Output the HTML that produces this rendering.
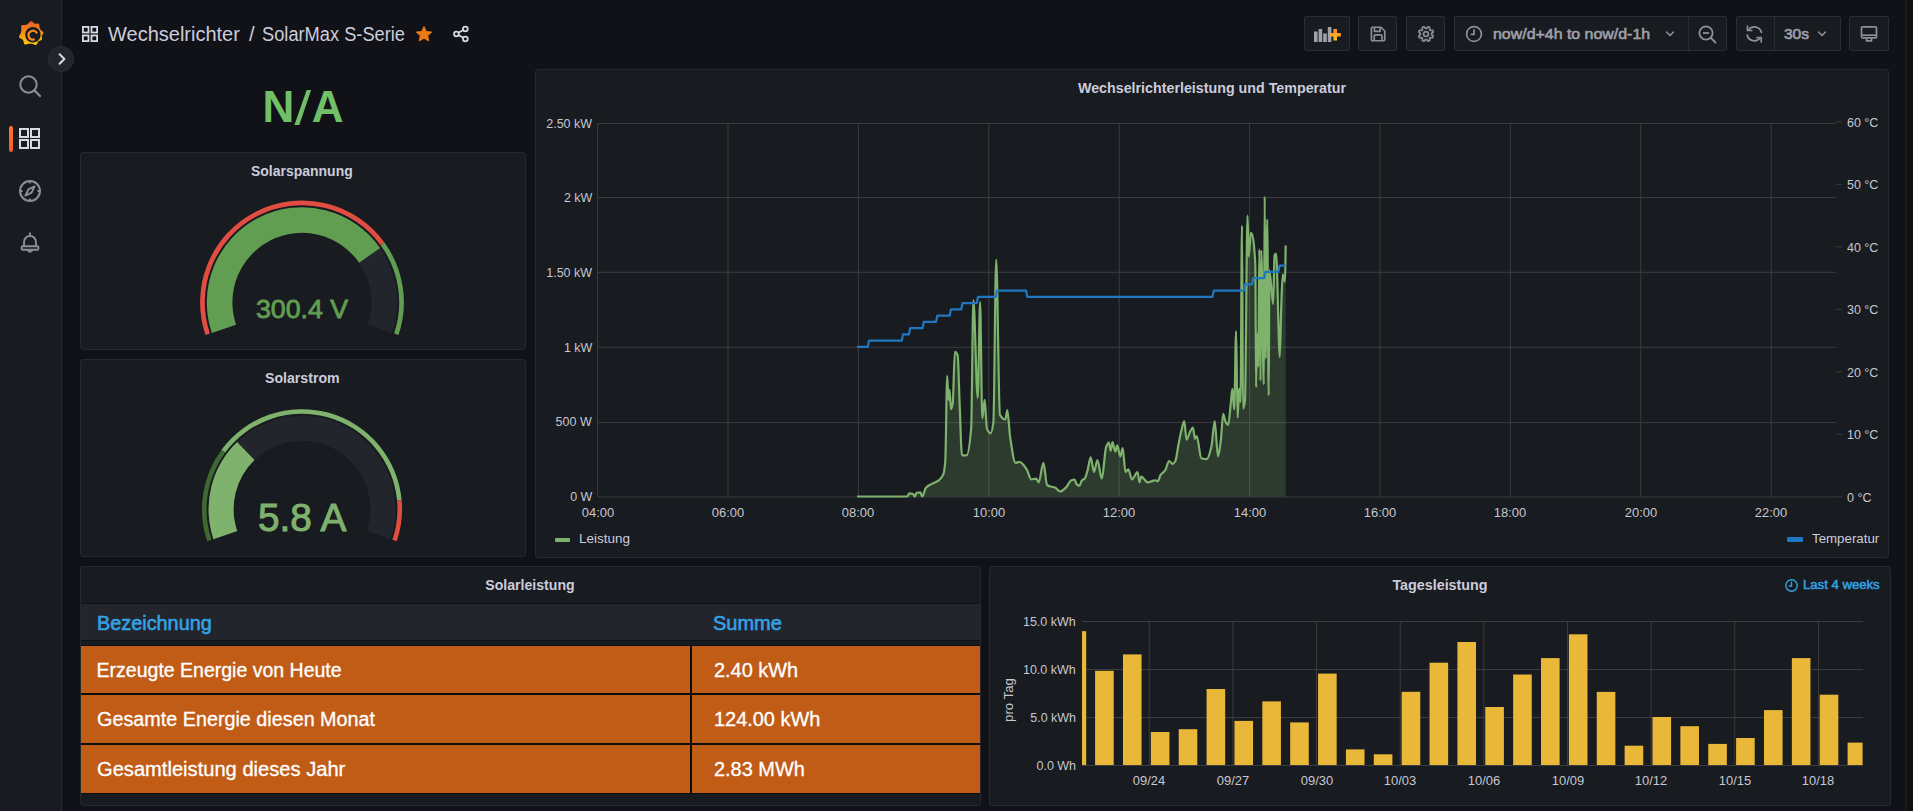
<!DOCTYPE html>
<html><head><meta charset="utf-8"><style>
html,body{margin:0;padding:0;background:#111217;}
body{width:1913px;height:811px;overflow:hidden;background:#111217;position:relative;font-family:"Liberation Sans", sans-serif;}
.t{position:absolute;white-space:pre;line-height:1;}
svg{display:block;}
</style></head><body>
<div style="position:absolute;left:0px;top:0px;width:61px;height:811px;background:#181b1f;border-right:1px solid #25272c;"></div>
<div style="position:absolute;left:1906px;top:0px;width:1px;height:811px;background:#1f1f22;"></div>
<div style="position:absolute;left:1907px;top:0px;width:6px;height:811px;background:#100f12;"></div>
<svg style="position:absolute;left:17px;top:20px;" width="28" height="28" viewBox="0 0 28 28"><defs><linearGradient id="lg" x1="0" y1="0" x2="0" y2="1"><stop offset="0" stop-color="#f05a28"/><stop offset="1" stop-color="#fbca0a"/></linearGradient></defs>
<path fill="url(#lg)" d="M26.25 13.60 L26.15 13.81 L26.03 14.02 L25.90 14.22 L25.75 14.42 L25.60 14.62 L25.45 14.80 L25.31 14.99 L25.17 15.17 L25.04 15.35 L24.94 15.53 L24.85 15.71 L24.78 15.89 L24.73 16.08 L24.71 16.27 L24.70 16.47 L24.72 16.67 L24.75 16.89 L24.79 17.11 L24.84 17.33 L24.89 17.57 L24.95 17.80 L25.00 18.04 L25.04 18.29 L25.06 18.53 L25.07 18.76 L25.05 18.99 L25.01 19.21 L24.95 19.42 L24.85 19.61 L24.73 19.79 L24.58 19.96 L24.41 20.10 L24.22 20.23 L24.00 20.35 L23.78 20.45 L23.55 20.54 L23.31 20.61 L23.07 20.69 L22.83 20.75 L22.60 20.82 L22.38 20.88 L22.17 20.95 L21.97 21.03 L21.78 21.12 L21.62 21.22 L21.46 21.33 L21.32 21.45 L21.20 21.59 L21.08 21.75 L20.98 21.92 L20.89 22.11 L20.81 22.31 L20.73 22.52 L20.65 22.75 L20.57 22.98 L20.48 23.21 L20.40 23.45 L20.30 23.68 L20.19 23.90 L20.07 24.11 L19.93 24.30 L19.78 24.47 L19.62 24.62 L19.43 24.74 L19.24 24.84 L19.03 24.90 L18.81 24.93 L18.58 24.94 L18.35 24.92 L18.11 24.88 L17.86 24.82 L17.62 24.75 L17.38 24.66 L17.14 24.57 L16.91 24.47 L16.68 24.37 L16.46 24.27 L16.25 24.18 L16.04 24.10 L15.84 24.02 L15.64 23.95 L15.45 23.89 L15.26 23.84 L15.07 23.80 L14.89 23.76 L14.71 23.73 L14.53 23.71 L14.35 23.69 L14.18 23.67 L14.00 23.66 L13.82 23.65 L13.65 23.64 L13.47 23.63 L13.30 23.63 L13.12 23.62 L12.95 23.62 L12.77 23.62 L12.59 23.63 L12.41 23.64 L12.23 23.65 L12.04 23.67 L11.85 23.70 L11.66 23.73 L11.46 23.78 L11.26 23.83 L11.05 23.89 L10.83 23.96 L10.61 24.03 L10.38 24.11 L10.15 24.19 L9.91 24.26 L9.66 24.34 L9.41 24.40 L9.17 24.46 L8.92 24.49 L8.68 24.51 L8.44 24.51 L8.22 24.48 L8.00 24.42 L7.80 24.34 L7.62 24.22 L7.45 24.09 L7.30 23.92 L7.16 23.73 L7.05 23.53 L6.95 23.30 L6.87 23.07 L6.79 22.82 L6.73 22.58 L6.68 22.33 L6.63 22.08 L6.58 21.84 L6.53 21.61 L6.49 21.38 L6.43 21.17 L6.38 20.96 L6.32 20.77 L6.25 20.58 L6.17 20.41 L6.08 20.24 L5.99 20.09 L5.88 19.94 L5.76 19.81 L5.64 19.68 L5.50 19.55 L5.35 19.43 L5.19 19.32 L5.01 19.21 L4.83 19.11 L4.63 19.01 L4.43 18.91 L4.21 18.81 L3.99 18.70 L3.76 18.59 L3.53 18.48 L3.31 18.36 L3.09 18.23 L2.88 18.09 L2.69 17.94 L2.51 17.78 L2.36 17.61 L2.24 17.42 L2.15 17.22 L2.08 17.02 L2.05 16.80 L2.05 16.58 L2.07 16.35 L2.13 16.12 L2.20 15.89 L2.30 15.66 L2.41 15.44 L2.53 15.21 L2.66 14.99 L2.80 14.78 L2.93 14.57 L3.06 14.36 L3.19 14.17 L3.30 13.97 L3.41 13.78 L3.51 13.60 L3.60 13.42 L3.68 13.24 L3.75 13.06 L3.82 12.89 L3.88 12.71 L3.93 12.54 L3.98 12.37 L4.02 12.20 L4.06 12.03 L4.10 11.85 L4.14 11.68 L4.17 11.51 L4.21 11.34 L4.24 11.17 L4.27 10.99 L4.30 10.82 L4.33 10.64 L4.35 10.46 L4.36 10.28 L4.38 10.10 L4.38 9.91 L4.38 9.71 L4.37 9.51 L4.35 9.31 L4.33 9.09 L4.30 8.87 L4.27 8.64 L4.23 8.40 L4.19 8.16 L4.15 7.91 L4.11 7.66 L4.09 7.41 L4.07 7.15 L4.07 6.90 L4.08 6.66 L4.12 6.42 L4.18 6.20 L4.26 5.99 L4.37 5.80 L4.50 5.63 L4.66 5.48 L4.84 5.35 L5.04 5.25 L5.26 5.16 L5.49 5.09 L5.74 5.04 L5.99 5.01 L6.24 4.98 L6.50 4.97 L6.75 4.96 L7.00 4.95 L7.24 4.95 L7.47 4.94 L7.70 4.93 L7.92 4.92 L8.13 4.90 L8.33 4.87 L8.52 4.84 L8.71 4.80 L8.89 4.75 L9.07 4.70 L9.24 4.65 L9.41 4.59 L9.57 4.52 L9.73 4.45 L9.89 4.38 L10.05 4.30 L10.21 4.22 L10.37 4.14 L10.52 4.04 L10.68 3.94 L10.83 3.84 L10.98 3.72 L11.13 3.60 L11.28 3.47 L11.44 3.32 L11.59 3.17 L11.75 3.01 L11.91 2.83 L12.07 2.66 L12.24 2.47 L12.41 2.29 L12.59 2.11 L12.77 1.93 L12.96 1.76 L13.16 1.61 L13.36 1.48 L13.57 1.37 L13.78 1.28 L14.00 1.23 L14.22 1.20 L14.43 1.21 L14.65 1.25 L14.86 1.32 L15.07 1.42 L15.27 1.54 L15.46 1.69 L15.65 1.85 L15.83 2.03 L16.01 2.21 L16.18 2.39 L16.34 2.57 L16.50 2.75 L16.66 2.92 L16.82 3.08 L16.98 3.22 L17.14 3.34 L17.30 3.45 L17.46 3.54 L17.63 3.61 L17.81 3.67 L18.00 3.70 L18.19 3.72 L18.40 3.73 L18.61 3.72 L18.83 3.70 L19.06 3.67 L19.30 3.63 L19.54 3.60 L19.79 3.57 L20.04 3.54 L20.29 3.53 L20.54 3.52 L20.78 3.54 L21.02 3.58 L21.24 3.64 L21.44 3.72 L21.63 3.83 L21.80 3.97 L21.95 4.13 L22.08 4.31 L22.19 4.51 L22.27 4.73 L22.34 4.96 L22.39 5.21 L22.43 5.46 L22.46 5.71 L22.48 5.97 L22.49 6.22 L22.50 6.47 L22.51 6.71 L22.53 6.94 L22.54 7.16 L22.56 7.38 L22.59 7.59 L22.62 7.78 L22.66 7.97 L22.71 8.16 L22.77 8.33 L22.83 8.50 L22.90 8.67 L22.97 8.83 L23.05 8.99 L23.14 9.14 L23.24 9.29 L23.34 9.44 L23.46 9.59 L23.58 9.73 L23.71 9.87 L23.85 10.01 L24.01 10.15 L24.17 10.30 L24.35 10.44 L24.53 10.58 L24.72 10.73 L24.92 10.88 L25.12 11.03 L25.31 11.20 L25.51 11.36 L25.69 11.54 L25.86 11.72 L26.01 11.91 L26.14 12.11 L26.25 12.31 L26.32 12.52 L26.37 12.73 L26.39 12.95 L26.37 13.17 L26.32 13.38Z"/>
<circle cx="15.9" cy="14.7" r="7.7" fill="#181b1f"/>
<path d="M19.60 12.68 A4.4 4.4 0 1 0 16.76 19.53" fill="none" stroke="#f48a24" stroke-width="2.3" stroke-linecap="round"/>
<circle cx="16.1" cy="15.3" r="2.6" fill="#181b1f"/></svg>
<svg style="position:absolute;left:18px;top:74px;" width="24" height="24" viewBox="0 0 24 24"><circle cx="10.5" cy="10.5" r="8.2" fill="none" stroke="#8e8e9a" stroke-width="2"/><path d="M16.5 16.5 L22 22" stroke="#8e8e9a" stroke-width="2.2" stroke-linecap="round"/></svg>
<div style="position:absolute;left:9px;top:126px;width:4px;height:26px;background:linear-gradient(#ff7a2a,#f05a28);border-radius:2px;"></div>
<svg style="position:absolute;left:18px;top:127px;" width="24" height="24" viewBox="0 0 24 24"><g fill="none" stroke="#d8d9e3" stroke-width="2"><rect x="2" y="2" width="8" height="8"/><rect x="13" y="2" width="8" height="8"/><rect x="2" y="13" width="8" height="8"/><rect x="13" y="13" width="8" height="8"/></g></svg>
<svg style="position:absolute;left:18px;top:179px;" width="24" height="24" viewBox="0 0 24 24"><g fill="none" stroke="#8e8e9a" stroke-width="2"><circle cx="12" cy="12" r="10"/><path d="M12 2.5v2M12 19.5v2M2.5 12h2M19.5 12h2" stroke-width="1.8"/><path d="M16.6 7.4 L13.6 13.6 L7.4 16.6 L10.4 10.4 Z" stroke-linejoin="round" stroke-width="1.9"/></g></svg>
<svg style="position:absolute;left:18px;top:231px;" width="24" height="24" viewBox="0 0 24 24"><g fill="none" stroke="#8e8e9a" stroke-width="1.9" stroke-linejoin="round"><path d="M12 1.5v2.5"/><path d="M6 15.2 V11 A6 6 0 0 1 18 11 V15.2"/><rect x="3.6" y="15.2" width="16.8" height="3.6" rx="1"/><path d="M9.7 19 A2.4 2.4 0 0 0 14.3 19"/></g></svg>
<div style="position:absolute;left:48px;top:46px;width:24px;height:24px;border-radius:50%;background:#22252b;border:1px solid #2c2f35;"></div>
<svg style="position:absolute;left:54.5px;top:52px;" width="14" height="14" viewBox="0 0 14 14"><path d="M4.6 2.2 L9.4 7 L4.6 11.8" fill="none" stroke="#d8d9e3" stroke-width="2" stroke-linecap="round" stroke-linejoin="round"/></svg>
<svg style="position:absolute;left:81px;top:25px;" width="18" height="18" viewBox="0 0 18 18"><g fill="none" stroke="#d8d9e3" stroke-width="1.8"><rect x="1.9" y="1.9" width="5.6" height="5.6"/><rect x="10.5" y="1.9" width="5.6" height="5.6"/><rect x="1.9" y="10.5" width="5.6" height="5.6"/><rect x="10.5" y="10.5" width="5.6" height="5.6"/></g></svg>
<div class="t" style="left:108px;top:23.90px;font-size:20px;color:#ccccdc;font-weight:400;">Wechselrichter</div>
<div class="t" style="left:249px;top:23.90px;font-size:20px;color:#ccccdc;font-weight:400;">/</div>
<div class="t" style="left:262px;top:23.90px;font-size:20px;color:#ccccdc;font-weight:400;transform:scaleX(0.9125717932354819);transform-origin:left 0;">SolarMax S-Serie</div>
<svg style="position:absolute;left:414px;top:25px;" width="20" height="18" viewBox="0 0 20 18"><path transform="translate(10,8.7) scale(0.9) translate(-10,-9)" d="M10 1 L12.6 6.6 L18.6 7.2 L14.1 11.2 L15.4 17.1 L10 14.1 L4.6 17.1 L5.9 11.2 L1.4 7.2 L7.4 6.6 Z" fill="#eb7b18" stroke="#eb7b18" stroke-width="1" stroke-linejoin="round"/></svg>
<svg style="position:absolute;left:451px;top:24px;" width="20" height="20" viewBox="0 0 20 20"><g transform="translate(9.9,9.9) scale(0.88) translate(-9.7,-10)" fill="none" stroke="#d8d9e3" stroke-width="2"><circle cx="14.8" cy="4.3" r="2.7"/><circle cx="4.6" cy="10" r="2.7"/><circle cx="14.8" cy="15.7" r="2.7"/><path d="M7 8.7 L12.4 5.6 M7 11.3 L12.4 14.4"/></g></svg>
<div style="position:absolute;left:1304px;top:16px;width:46px;height:35px;background:#181b1f;border:1px solid #2a2d33;border-radius:2px;box-sizing:border-box;"></div>
<div style="position:absolute;left:1358px;top:16px;width:39px;height:35px;background:#181b1f;border:1px solid #2a2d33;border-radius:2px;box-sizing:border-box;"></div>
<div style="position:absolute;left:1406px;top:16px;width:39px;height:35px;background:#181b1f;border:1px solid #2a2d33;border-radius:2px;box-sizing:border-box;"></div>
<div style="position:absolute;left:1454px;top:16px;width:273px;height:35px;background:#181b1f;border:1px solid #2a2d33;border-radius:2px;box-sizing:border-box;"></div>
<div style="position:absolute;left:1688px;top:16px;width:1px;height:35px;background:#2a2d33;"></div>
<div style="position:absolute;left:1736px;top:16px;width:105px;height:35px;background:#181b1f;border:1px solid #2a2d33;border-radius:2px;box-sizing:border-box;"></div>
<div style="position:absolute;left:1774px;top:16px;width:1px;height:35px;background:#2a2d33;"></div>
<div style="position:absolute;left:1849px;top:16px;width:40px;height:35px;background:#181b1f;border:1px solid #2a2d33;border-radius:2px;box-sizing:border-box;"></div>
<svg style="position:absolute;left:1313px;top:25px;" width="30" height="18" viewBox="0 0 30 18"><defs><linearGradient id="pg" x1="0" y1="0" x2="0" y2="1"><stop offset="0" stop-color="#ff8833"/><stop offset="1" stop-color="#ffc41a"/></linearGradient></defs>
<g fill="#9fa0ab"><rect x="1" y="6.5" width="3.6" height="10.5"/><rect x="5.6" y="4" width="3.6" height="13"/><rect x="10.2" y="8.5" width="3.6" height="8.5"/><rect x="14.8" y="2" width="3.6" height="15"/></g>
<path d="M22.2 4 V15.5 M16.5 9.7 H27.8" stroke="url(#pg)" stroke-width="3.6"/></svg>
<svg style="position:absolute;left:1368.5px;top:24.5px;" width="18" height="18" viewBox="0 0 18 18"><g transform="translate(9,9) scale(0.94) translate(-9,-9)" fill="none" stroke="#8e8e9a" stroke-width="1.8" stroke-linejoin="round"><path d="M2 3 Q2 1.8 3.2 1.8 H12.2 L16.2 5.8 V14.8 Q16.2 16.2 14.8 16.2 H3.2 Q2 16.2 2 15 Z"/><path d="M5.2 2 V6.2 H11.2 V2"/><path d="M5 16 V11 Q5 10 6 10 H12.2 Q13.2 10 13.2 11 V16"/></g></svg>
<svg style="position:absolute;left:1415.8px;top:23.8px;" width="20" height="20" viewBox="0 0 20 20"><g fill="none" stroke="#8e8e9a" stroke-width="1.7" stroke-linejoin="round"><path d="M15.61 10.00 L15.61 10.11 L15.61 10.22 L15.61 10.33 L15.62 10.44 L15.63 10.55 L15.66 10.67 L15.73 10.79 L15.88 10.93 L16.13 11.09 L16.47 11.29 L16.81 11.49 L17.05 11.69 L17.17 11.87 L17.22 12.04 L17.22 12.19 L17.20 12.34 L17.16 12.48 L17.11 12.62 L17.06 12.76 L17.01 12.90 L16.95 13.04 L16.89 13.17 L16.82 13.31 L16.74 13.43 L16.65 13.56 L16.54 13.66 L16.40 13.75 L16.18 13.79 L15.87 13.76 L15.49 13.67 L15.11 13.56 L14.81 13.50 L14.61 13.49 L14.48 13.53 L14.37 13.59 L14.28 13.66 L14.20 13.74 L14.12 13.81 L14.05 13.89 L13.97 13.97 L13.89 14.05 L13.81 14.12 L13.74 14.20 L13.66 14.28 L13.59 14.37 L13.53 14.48 L13.49 14.61 L13.50 14.81 L13.56 15.11 L13.67 15.49 L13.76 15.87 L13.79 16.18 L13.75 16.40 L13.66 16.54 L13.56 16.65 L13.43 16.74 L13.31 16.82 L13.17 16.89 L13.04 16.95 L12.90 17.01 L12.76 17.06 L12.62 17.11 L12.48 17.16 L12.34 17.20 L12.19 17.22 L12.04 17.22 L11.87 17.17 L11.69 17.05 L11.49 16.81 L11.29 16.47 L11.09 16.13 L10.93 15.88 L10.79 15.73 L10.67 15.66 L10.55 15.63 L10.44 15.62 L10.33 15.61 L10.22 15.61 L10.11 15.61 L10.00 15.61 L9.89 15.61 L9.78 15.61 L9.67 15.61 L9.56 15.62 L9.45 15.63 L9.33 15.66 L9.21 15.73 L9.07 15.88 L8.91 16.13 L8.71 16.47 L8.51 16.81 L8.31 17.05 L8.13 17.17 L7.96 17.22 L7.81 17.22 L7.66 17.20 L7.52 17.16 L7.38 17.11 L7.24 17.06 L7.10 17.01 L6.96 16.95 L6.83 16.89 L6.69 16.82 L6.57 16.74 L6.44 16.65 L6.34 16.54 L6.25 16.40 L6.21 16.18 L6.24 15.87 L6.33 15.49 L6.44 15.11 L6.50 14.81 L6.51 14.61 L6.47 14.48 L6.41 14.37 L6.34 14.28 L6.26 14.20 L6.19 14.12 L6.11 14.05 L6.03 13.97 L5.95 13.89 L5.88 13.81 L5.80 13.74 L5.72 13.66 L5.63 13.59 L5.52 13.53 L5.39 13.49 L5.19 13.50 L4.89 13.56 L4.51 13.67 L4.13 13.76 L3.82 13.79 L3.60 13.75 L3.46 13.66 L3.35 13.56 L3.26 13.43 L3.18 13.31 L3.11 13.17 L3.05 13.04 L2.99 12.90 L2.94 12.76 L2.89 12.62 L2.84 12.48 L2.80 12.34 L2.78 12.19 L2.78 12.04 L2.83 11.87 L2.95 11.69 L3.19 11.49 L3.53 11.29 L3.87 11.09 L4.12 10.93 L4.27 10.79 L4.34 10.67 L4.37 10.55 L4.38 10.44 L4.39 10.33 L4.39 10.22 L4.39 10.11 L4.39 10.00 L4.39 9.89 L4.39 9.78 L4.39 9.67 L4.38 9.56 L4.37 9.45 L4.34 9.33 L4.27 9.21 L4.12 9.07 L3.87 8.91 L3.53 8.71 L3.19 8.51 L2.95 8.31 L2.83 8.13 L2.78 7.96 L2.78 7.81 L2.80 7.66 L2.84 7.52 L2.89 7.38 L2.94 7.24 L2.99 7.10 L3.05 6.96 L3.11 6.83 L3.18 6.69 L3.26 6.57 L3.35 6.44 L3.46 6.34 L3.60 6.25 L3.82 6.21 L4.13 6.24 L4.51 6.33 L4.89 6.44 L5.19 6.50 L5.39 6.51 L5.52 6.47 L5.63 6.41 L5.72 6.34 L5.80 6.26 L5.88 6.19 L5.95 6.11 L6.03 6.03 L6.11 5.95 L6.19 5.88 L6.26 5.80 L6.34 5.72 L6.41 5.63 L6.47 5.52 L6.51 5.39 L6.50 5.19 L6.44 4.89 L6.33 4.51 L6.24 4.13 L6.21 3.82 L6.25 3.60 L6.34 3.46 L6.44 3.35 L6.57 3.26 L6.69 3.18 L6.83 3.11 L6.96 3.05 L7.10 2.99 L7.24 2.94 L7.38 2.89 L7.52 2.84 L7.66 2.80 L7.81 2.78 L7.96 2.78 L8.13 2.83 L8.31 2.95 L8.51 3.19 L8.71 3.53 L8.91 3.87 L9.07 4.12 L9.21 4.27 L9.33 4.34 L9.45 4.37 L9.56 4.38 L9.67 4.39 L9.78 4.39 L9.89 4.39 L10.00 4.39 L10.11 4.39 L10.22 4.39 L10.33 4.39 L10.44 4.38 L10.55 4.37 L10.67 4.34 L10.79 4.27 L10.93 4.12 L11.09 3.87 L11.29 3.53 L11.49 3.19 L11.69 2.95 L11.87 2.83 L12.04 2.78 L12.19 2.78 L12.34 2.80 L12.48 2.84 L12.62 2.89 L12.76 2.94 L12.90 2.99 L13.04 3.05 L13.17 3.11 L13.31 3.18 L13.43 3.26 L13.56 3.35 L13.66 3.46 L13.75 3.60 L13.79 3.82 L13.76 4.13 L13.67 4.51 L13.56 4.89 L13.50 5.19 L13.49 5.39 L13.53 5.52 L13.59 5.63 L13.66 5.72 L13.74 5.80 L13.81 5.88 L13.89 5.95 L13.97 6.03 L14.05 6.11 L14.12 6.19 L14.20 6.26 L14.28 6.34 L14.37 6.41 L14.48 6.47 L14.61 6.51 L14.81 6.50 L15.11 6.44 L15.49 6.33 L15.87 6.24 L16.18 6.21 L16.40 6.25 L16.54 6.34 L16.65 6.44 L16.74 6.57 L16.82 6.69 L16.89 6.83 L16.95 6.96 L17.01 7.10 L17.06 7.24 L17.11 7.38 L17.16 7.52 L17.20 7.66 L17.22 7.81 L17.22 7.96 L17.17 8.13 L17.05 8.31 L16.81 8.51 L16.47 8.71 L16.13 8.91 L15.88 9.07 L15.73 9.21 L15.66 9.33 L15.63 9.45 L15.62 9.56 L15.61 9.67 L15.61 9.78 L15.61 9.89Z"/><circle cx="10" cy="10" r="2.4"/></g></svg>
<svg style="position:absolute;left:1465px;top:25px;" width="18" height="18" viewBox="0 0 18 18"><g fill="none" stroke="#8e8e9a" stroke-width="1.7"><circle cx="9" cy="9" r="7.4"/><path d="M9 4.8 V9.3 H6.3" stroke-linecap="round"/></g></svg>
<div class="t" style="left:1492.6px;top:25.80px;font-size:15px;color:#9fa0ab;font-weight:400;transform:scaleX(1.0614864864864864);transform-origin:left 0;-webkit-text-stroke:0.6px #9fa0ab;">now/d+4h to now/d-1h</div>
<svg style="position:absolute;left:1664px;top:29px;" width="12" height="10" viewBox="0 0 12 10"><path d="M2.5 3 L6 6.5 L9.5 3" fill="none" stroke="#8e8e9a" stroke-width="1.6" stroke-linecap="round" stroke-linejoin="round"/></svg>
<svg style="position:absolute;left:1698px;top:25px;" width="20" height="19" viewBox="0 0 20 19"><g fill="none" stroke="#8e8e9a" stroke-width="1.8"><circle cx="8" cy="8" r="6.6"/><path d="M13 13 L17.5 17.5" stroke-linecap="round"/><path d="M5 8 H11"/></g></svg>
<svg style="position:absolute;left:1745px;top:25px;" width="20" height="18" viewBox="0 0 20 18"><g fill="none" stroke="#8e8e9a" stroke-width="1.7" stroke-linecap="round"><path d="M16.5 7.5 A7.3 7.3 0 0 0 3.5 5"/><path d="M2.5 1.2 V5.5 H6.8"/><path d="M2.2 10 A7.3 7.3 0 0 0 15.2 12.8"/><path d="M16.2 16.8 V12.5 H11.9"/></g></svg>
<div class="t" style="left:1783.8px;top:25.80px;font-size:15px;color:#9fa0ab;font-weight:400;transform:scaleX(1.0330578512396695);transform-origin:left 0;-webkit-text-stroke:0.6px #9fa0ab;">30s</div>
<svg style="position:absolute;left:1816.3px;top:29px;" width="12" height="10" viewBox="0 0 12 10"><path d="M2.5 3 L6 6.5 L9.5 3" fill="none" stroke="#8e8e9a" stroke-width="1.6" stroke-linecap="round" stroke-linejoin="round"/></svg>
<svg style="position:absolute;left:1860px;top:25px;" width="18" height="18" viewBox="0 0 18 18"><g fill="none" stroke="#8e8e9a" stroke-width="1.7" stroke-linejoin="round"><rect x="1.5" y="1.8" width="15" height="11" rx="1"/><path d="M1.5 10.2 H16.5"/><path d="M6.5 13 V15.8 H11.5 V13"/></g></svg>
<div class="t" style="left:262.5px;top:85.20px;font-size:44px;color:#73bf69;font-weight:700;">N</div>
<div class="t" style="left:311.7px;top:85.20px;font-size:44px;color:#73bf69;font-weight:700;">A</div>
<svg style="position:absolute;left:290px;top:85px;" width="25" height="45" viewBox="0 0 25 45"><path d="M16.7 4.9 L21.1 4.9 L9.3 40 L4.4 40 Z" fill="#73bf69"/></svg>
<div style="position:absolute;left:80px;top:152px;width:446px;height:198px;background:#181b1f;border:1px solid #25282d;border-radius:3px;box-sizing:border-box;"></div>
<div style="position:absolute;left:80px;top:359px;width:446px;height:198px;background:#181b1f;border:1px solid #25282d;border-radius:3px;box-sizing:border-box;"></div>
<div style="position:absolute;left:535px;top:69px;width:1354px;height:489px;background:#181b1f;border:1px solid #25282d;border-radius:3px;box-sizing:border-box;"></div>
<div style="position:absolute;left:80px;top:566px;width:901px;height:240px;background:#181b1f;border:1px solid #25282d;border-radius:3px;box-sizing:border-box;"></div>
<div style="position:absolute;left:989px;top:566px;width:902px;height:240px;background:#181b1f;border:1px solid #25282d;border-radius:3px;box-sizing:border-box;"></div>
<div class="t" style="left:251.0px;top:163.40px;font-size:15.2px;color:#ccccdc;font-weight:700;transform:scaleX(0.92);transform-origin:left 0;">Solarspannung</div>
<svg style="position:absolute;left:80px;top:152px" width="446" height="200" viewBox="80 152 446 200"><path d="M205.48 335.07 A101.9 101.9 0 0 1 384.44 242.51 L380.64 245.27 A97.2 97.2 0 0 0 209.93 333.56 Z" fill="#e24d42"/><path d="M384.44 242.51 A101.9 101.9 0 0 1 398.52 335.07 L394.07 333.56 A97.2 97.2 0 0 0 380.64 245.27 Z" fill="#629e51"/><path d="M211.83 332.92 A95.2 95.2 0 1 1 392.17 332.92 L367.93 324.71 A69.6 69.6 0 1 0 236.07 324.71 Z" fill="#22252b"/><path d="M211.83 332.92 A95.2 95.2 0 0 1 380.17 248.07 L359.15 262.68 A69.6 69.6 0 0 0 236.07 324.71 Z" fill="#629e51"/></svg>
<div class="t" style="left:256.4px;top:297.30px;font-size:25px;color:#629e51;font-weight:400;transform:scaleX(1.0696055684454757);transform-origin:left 0;-webkit-text-stroke:0.8px #629e51;">300.4 V</div>
<div class="t" style="left:264.8px;top:370.10px;font-size:15.2px;color:#ccccdc;font-weight:700;transform:scaleX(0.93);transform-origin:left 0;">Solarstrom</div>
<svg style="position:absolute;left:80px;top:359px" width="446" height="200" viewBox="80 359 446 200"><path d="M207.22 541.28 A100.06580000000001 100.06580000000001 0 0 1 221.56 449.68 L225.27 452.43 A95.4504 95.4504 0 0 0 211.59 539.80 Z" fill="#3f6833"/><path d="M221.56 449.68 A100.06580000000001 100.06580000000001 0 0 1 401.66 500.14 L397.06 500.56 A95.4504 95.4504 0 0 0 225.27 452.43 Z" fill="#7eb26d"/><path d="M401.66 500.14 A100.06580000000001 100.06580000000001 0 0 1 396.78 541.28 L392.41 539.80 A95.4504 95.4504 0 0 0 397.06 500.56 Z" fill="#e24d42"/><path d="M213.45 539.17 A93.4864 93.4864 0 1 1 390.55 539.17 L366.74 531.11 A68.34719999999999 68.34719999999999 0 1 0 237.26 531.11 Z" fill="#22252b"/><path d="M213.45 539.17 A93.4864 93.4864 0 0 1 237.06 441.95 L254.52 460.04 A68.34719999999999 68.34719999999999 0 0 0 237.26 531.11 Z" fill="#7eb26d"/></svg>
<div class="t" style="left:258.2px;top:499.30px;font-size:38px;color:#7eb26d;font-weight:400;transform:scaleX(1.02);transform-origin:left 0;-webkit-text-stroke:1.0px #7eb26d;">5.8 A</div>
<div class="t" style="left:1211.9px;top:79.90px;font-size:15.2px;color:#ccccdc;font-weight:700;transform:translateX(-50%) scaleX(0.939);transform-origin:center 0;">Wechselrichterleistung und Temperatur</div>
<svg style="position:absolute;left:535px;top:69px" width="1354" height="489" viewBox="535 69 1354 489"><path d="M598 123.50 H1836" stroke="#3b3c41" stroke-width="1"/><path d="M598 197.50 H1836" stroke="#3b3c41" stroke-width="1"/><path d="M598 272.30 H1836" stroke="#3b3c41" stroke-width="1"/><path d="M598 347.30 H1836" stroke="#3b3c41" stroke-width="1"/><path d="M598 422.60 H1836" stroke="#3b3c41" stroke-width="1"/><path d="M598 497.00 H1836" stroke="#3b3c41" stroke-width="1"/><path d="M597.60 123 V497" stroke="#3b3c41" stroke-width="1"/><path d="M728.00 123 V497" stroke="#3b3c41" stroke-width="1"/><path d="M858.40 123 V497" stroke="#3b3c41" stroke-width="1"/><path d="M988.80 123 V497" stroke="#3b3c41" stroke-width="1"/><path d="M1119.20 123 V497" stroke="#3b3c41" stroke-width="1"/><path d="M1249.60 123 V497" stroke="#3b3c41" stroke-width="1"/><path d="M1380.00 123 V497" stroke="#3b3c41" stroke-width="1"/><path d="M1510.40 123 V497" stroke="#3b3c41" stroke-width="1"/><path d="M1640.80 123 V497" stroke="#3b3c41" stroke-width="1"/><path d="M1771.20 123 V497" stroke="#3b3c41" stroke-width="1"/><path d="M1836 496.80 H1842" stroke="#3b3c41" stroke-width="1"/><path d="M1836 434.30 H1842" stroke="#3b3c41" stroke-width="1"/><path d="M1836 371.80 H1842" stroke="#3b3c41" stroke-width="1"/><path d="M1836 309.30 H1842" stroke="#3b3c41" stroke-width="1"/><path d="M1836 246.80 H1842" stroke="#3b3c41" stroke-width="1"/><path d="M1836 184.30 H1842" stroke="#3b3c41" stroke-width="1"/><path d="M1836 121.80 H1842" stroke="#3b3c41" stroke-width="1"/><path d="M857.0 496.5 C873.80 496.50 890.60 496.50 907.4 496.5 C908.00 496.50 908.60 493.40 909.2 493.4 C910.47 493.40 911.73 493.60 913.0 494.0 C913.60 494.19 914.20 496.50 914.8 496.5 C915.40 496.50 916.00 492.94 916.6 492.8 C917.83 492.52 919.07 492.40 920.3 492.4 C920.93 492.40 921.57 496.50 922.2 496.5 C923.43 496.50 924.67 489.14 925.9 487.8 C927.73 485.81 929.57 485.16 931.4 484.1 C933.87 482.67 936.33 482.28 938.8 480.4 C940.37 479.21 941.93 477.94 943.5 473.9 C944.10 472.35 944.70 468.37 945.3 461.0 C945.93 453.23 946.57 375.90 947.2 375.9 C947.63 375.90 948.07 400.00 948.5 400.0 C948.87 400.00 949.23 389.80 949.6 389.8 C950.03 389.80 950.47 409.20 950.9 409.2 C951.50 409.20 952.10 406.82 952.7 403.6 C953.43 399.67 954.17 351.80 954.9 351.8 C955.83 351.80 956.77 353.00 957.7 355.5 C958.30 357.11 958.90 385.94 959.5 400.0 C960.33 419.53 961.17 455.40 962.0 455.4 C963.53 455.40 965.07 455.40 966.6 455.4 C968.13 455.40 969.67 446.19 971.2 427.7 C971.93 418.86 972.67 300.30 973.4 300.3 C974.83 300.30 976.27 398.10 977.7 398.1 C978.50 398.10 979.30 302.20 980.1 302.2 C980.83 302.20 981.57 418.40 982.3 418.4 C983.10 418.40 983.90 399.90 984.7 399.9 C985.43 399.90 986.17 426.81 986.9 428.6 C988.13 431.61 989.37 433.20 990.6 433.2 C991.53 433.20 992.47 429.03 993.4 422.1 C994.33 415.17 995.27 259.60 996.2 259.6 C997.43 259.60 998.67 412.50 999.9 414.7 C1001.73 417.98 1003.57 419.40 1005.4 419.4 C1006.03 419.40 1006.67 410.10 1007.3 410.1 C1008.23 410.10 1009.17 430.78 1010.1 436.9 C1011.93 448.92 1013.77 462.80 1015.6 462.8 C1016.83 462.80 1018.07 461.90 1019.3 461.9 C1021.77 461.90 1024.23 465.80 1026.7 469.3 C1028.23 471.48 1029.77 479.50 1031.3 479.5 C1032.87 479.50 1034.43 478.60 1036.0 478.6 C1036.90 478.60 1037.80 482.30 1038.7 482.3 C1040.27 482.30 1041.83 462.80 1043.4 462.8 C1044.63 462.80 1045.87 484.11 1047.1 485.0 C1049.87 487.00 1052.63 486.43 1055.4 487.8 C1056.93 488.56 1058.47 491.50 1060.0 491.5 C1062.17 491.50 1064.33 488.98 1066.5 486.9 C1068.03 485.43 1069.57 481.05 1071.1 480.4 C1072.27 479.91 1073.43 479.50 1074.6 479.5 C1075.23 479.50 1075.87 483.39 1076.5 484.1 C1077.40 485.11 1078.30 486.00 1079.2 486.0 C1080.13 486.00 1081.07 481.31 1082.0 480.4 C1082.93 479.49 1083.87 479.59 1084.8 478.6 C1085.73 477.61 1086.67 473.45 1087.6 470.2 C1088.63 466.61 1089.67 457.30 1090.7 457.3 C1091.80 457.30 1092.90 472.10 1094.0 472.1 C1095.13 472.10 1096.27 460.10 1097.4 460.1 C1098.87 460.10 1100.33 478.60 1101.8 478.6 C1103.23 478.60 1104.67 450.88 1106.1 447.1 C1107.00 444.72 1107.90 442.50 1108.8 442.5 C1109.43 442.50 1110.07 450.80 1110.7 450.8 C1111.30 450.80 1111.90 442.10 1112.5 442.1 C1113.43 442.10 1114.37 451.70 1115.3 451.7 C1115.93 451.70 1116.57 445.30 1117.2 445.3 C1118.23 445.30 1119.27 456.40 1120.3 456.4 C1121.10 456.40 1121.90 448.00 1122.7 448.0 C1123.63 448.00 1124.57 472.10 1125.5 472.1 C1126.43 472.10 1127.37 469.30 1128.3 469.3 C1129.53 469.30 1130.77 479.50 1132.0 479.5 C1133.83 479.50 1135.67 472.10 1137.5 472.1 C1138.13 472.10 1138.77 482.30 1139.4 482.3 C1140.00 482.30 1140.60 476.70 1141.2 476.7 C1143.37 476.70 1145.53 482.30 1147.7 482.3 C1150.17 482.30 1152.63 480.40 1155.1 480.4 C1156.03 480.40 1156.97 481.30 1157.9 481.3 C1158.80 481.30 1159.70 476.21 1160.6 474.9 C1162.17 472.61 1163.73 472.47 1165.3 470.2 C1166.53 468.41 1167.77 461.00 1169.0 461.0 C1170.23 461.00 1171.47 463.80 1172.7 463.8 C1173.60 463.80 1174.50 462.55 1175.4 461.0 C1176.33 459.39 1177.27 450.98 1178.2 446.2 C1179.13 441.42 1180.07 436.06 1181.0 432.3 C1182.10 427.87 1183.20 421.20 1184.3 421.2 C1185.03 421.20 1185.77 439.70 1186.5 439.7 C1187.73 439.70 1188.97 433.43 1190.2 431.4 C1191.13 429.87 1192.07 427.70 1193.0 427.7 C1193.63 427.70 1194.27 438.80 1194.9 438.8 C1195.50 438.80 1196.10 436.00 1196.7 436.0 C1198.23 436.00 1199.77 457.71 1201.3 458.2 C1203.17 458.80 1205.03 459.10 1206.9 459.1 C1208.43 459.10 1209.97 452.71 1211.5 446.2 C1212.57 441.67 1213.63 421.20 1214.7 421.2 C1215.80 421.20 1216.90 456.40 1218.0 456.4 C1218.93 456.40 1219.87 447.66 1220.8 440.6 C1221.60 434.55 1222.40 413.80 1223.2 413.8 C1223.93 413.80 1224.67 419.78 1225.4 421.2 C1226.33 423.00 1227.27 424.90 1228.2 424.9 C1229.10 424.90 1230.00 409.55 1230.9 401.8 C1231.40 397.49 1231.90 388.80 1232.4 388.8 C1233.00 388.80 1233.60 409.50 1234.2 409.5 C1234.83 409.50 1235.47 331.10 1236.1 331.1 C1236.60 331.10 1237.10 417.70 1237.6 417.7 C1238.10 417.70 1238.60 388.80 1239.1 388.8 C1239.57 388.80 1240.03 402.10 1240.5 402.1 C1241.00 402.10 1241.50 225.50 1242.0 225.5 C1242.33 225.50 1242.67 408.80 1243.0 408.8 C1243.67 408.80 1244.33 405.61 1245.0 400.6 C1245.83 394.33 1246.67 215.50 1247.5 215.5 C1247.90 215.50 1248.30 256.60 1248.7 256.6 C1249.43 256.60 1250.17 232.90 1250.9 232.9 C1252.37 232.90 1253.83 238.89 1255.3 264.0 C1255.57 268.57 1255.83 387.30 1256.1 387.3 C1256.33 387.30 1256.57 333.30 1256.8 333.3 C1257.30 333.30 1257.80 366.60 1258.3 366.6 C1258.63 366.60 1258.97 249.20 1259.3 249.2 C1259.70 249.20 1260.10 380.70 1260.5 380.7 C1260.77 380.70 1261.03 250.70 1261.3 250.7 C1262.13 250.70 1262.97 384.40 1263.8 384.4 C1264.10 384.40 1264.40 196.70 1264.7 196.7 C1265.03 196.70 1265.37 358.50 1265.7 358.5 C1266.20 358.50 1266.70 219.60 1267.2 219.6 C1267.70 219.60 1268.20 395.50 1268.7 395.5 C1268.93 395.50 1269.17 270.00 1269.4 270.0 C1270.63 270.00 1271.87 304.00 1273.1 304.0 C1273.60 304.00 1274.10 256.07 1274.6 255.1 C1275.10 254.13 1275.60 253.60 1276.1 253.6 C1277.33 253.60 1278.57 357.00 1279.8 357.0 C1280.27 357.00 1280.73 321.23 1281.2 308.4 C1281.70 294.65 1282.20 274.40 1282.7 274.4 C1283.47 274.40 1284.23 281.80 1285.0 281.8 C1285.23 281.80 1285.47 257.60 1285.7 245.5 L1285.7 496.5 L857 496.5 Z" fill="rgba(126,178,109,0.21)"/><path d="M857.0 496.5 C873.80 496.50 890.60 496.50 907.4 496.5 C908.00 496.50 908.60 493.40 909.2 493.4 C910.47 493.40 911.73 493.60 913.0 494.0 C913.60 494.19 914.20 496.50 914.8 496.5 C915.40 496.50 916.00 492.94 916.6 492.8 C917.83 492.52 919.07 492.40 920.3 492.4 C920.93 492.40 921.57 496.50 922.2 496.5 C923.43 496.50 924.67 489.14 925.9 487.8 C927.73 485.81 929.57 485.16 931.4 484.1 C933.87 482.67 936.33 482.28 938.8 480.4 C940.37 479.21 941.93 477.94 943.5 473.9 C944.10 472.35 944.70 468.37 945.3 461.0 C945.93 453.23 946.57 375.90 947.2 375.9 C947.63 375.90 948.07 400.00 948.5 400.0 C948.87 400.00 949.23 389.80 949.6 389.8 C950.03 389.80 950.47 409.20 950.9 409.2 C951.50 409.20 952.10 406.82 952.7 403.6 C953.43 399.67 954.17 351.80 954.9 351.8 C955.83 351.80 956.77 353.00 957.7 355.5 C958.30 357.11 958.90 385.94 959.5 400.0 C960.33 419.53 961.17 455.40 962.0 455.4 C963.53 455.40 965.07 455.40 966.6 455.4 C968.13 455.40 969.67 446.19 971.2 427.7 C971.93 418.86 972.67 300.30 973.4 300.3 C974.83 300.30 976.27 398.10 977.7 398.1 C978.50 398.10 979.30 302.20 980.1 302.2 C980.83 302.20 981.57 418.40 982.3 418.4 C983.10 418.40 983.90 399.90 984.7 399.9 C985.43 399.90 986.17 426.81 986.9 428.6 C988.13 431.61 989.37 433.20 990.6 433.2 C991.53 433.20 992.47 429.03 993.4 422.1 C994.33 415.17 995.27 259.60 996.2 259.6 C997.43 259.60 998.67 412.50 999.9 414.7 C1001.73 417.98 1003.57 419.40 1005.4 419.4 C1006.03 419.40 1006.67 410.10 1007.3 410.1 C1008.23 410.10 1009.17 430.78 1010.1 436.9 C1011.93 448.92 1013.77 462.80 1015.6 462.8 C1016.83 462.80 1018.07 461.90 1019.3 461.9 C1021.77 461.90 1024.23 465.80 1026.7 469.3 C1028.23 471.48 1029.77 479.50 1031.3 479.5 C1032.87 479.50 1034.43 478.60 1036.0 478.6 C1036.90 478.60 1037.80 482.30 1038.7 482.3 C1040.27 482.30 1041.83 462.80 1043.4 462.8 C1044.63 462.80 1045.87 484.11 1047.1 485.0 C1049.87 487.00 1052.63 486.43 1055.4 487.8 C1056.93 488.56 1058.47 491.50 1060.0 491.5 C1062.17 491.50 1064.33 488.98 1066.5 486.9 C1068.03 485.43 1069.57 481.05 1071.1 480.4 C1072.27 479.91 1073.43 479.50 1074.6 479.5 C1075.23 479.50 1075.87 483.39 1076.5 484.1 C1077.40 485.11 1078.30 486.00 1079.2 486.0 C1080.13 486.00 1081.07 481.31 1082.0 480.4 C1082.93 479.49 1083.87 479.59 1084.8 478.6 C1085.73 477.61 1086.67 473.45 1087.6 470.2 C1088.63 466.61 1089.67 457.30 1090.7 457.3 C1091.80 457.30 1092.90 472.10 1094.0 472.1 C1095.13 472.10 1096.27 460.10 1097.4 460.1 C1098.87 460.10 1100.33 478.60 1101.8 478.6 C1103.23 478.60 1104.67 450.88 1106.1 447.1 C1107.00 444.72 1107.90 442.50 1108.8 442.5 C1109.43 442.50 1110.07 450.80 1110.7 450.8 C1111.30 450.80 1111.90 442.10 1112.5 442.1 C1113.43 442.10 1114.37 451.70 1115.3 451.7 C1115.93 451.70 1116.57 445.30 1117.2 445.3 C1118.23 445.30 1119.27 456.40 1120.3 456.4 C1121.10 456.40 1121.90 448.00 1122.7 448.0 C1123.63 448.00 1124.57 472.10 1125.5 472.1 C1126.43 472.10 1127.37 469.30 1128.3 469.3 C1129.53 469.30 1130.77 479.50 1132.0 479.5 C1133.83 479.50 1135.67 472.10 1137.5 472.1 C1138.13 472.10 1138.77 482.30 1139.4 482.3 C1140.00 482.30 1140.60 476.70 1141.2 476.7 C1143.37 476.70 1145.53 482.30 1147.7 482.3 C1150.17 482.30 1152.63 480.40 1155.1 480.4 C1156.03 480.40 1156.97 481.30 1157.9 481.3 C1158.80 481.30 1159.70 476.21 1160.6 474.9 C1162.17 472.61 1163.73 472.47 1165.3 470.2 C1166.53 468.41 1167.77 461.00 1169.0 461.0 C1170.23 461.00 1171.47 463.80 1172.7 463.8 C1173.60 463.80 1174.50 462.55 1175.4 461.0 C1176.33 459.39 1177.27 450.98 1178.2 446.2 C1179.13 441.42 1180.07 436.06 1181.0 432.3 C1182.10 427.87 1183.20 421.20 1184.3 421.2 C1185.03 421.20 1185.77 439.70 1186.5 439.7 C1187.73 439.70 1188.97 433.43 1190.2 431.4 C1191.13 429.87 1192.07 427.70 1193.0 427.7 C1193.63 427.70 1194.27 438.80 1194.9 438.8 C1195.50 438.80 1196.10 436.00 1196.7 436.0 C1198.23 436.00 1199.77 457.71 1201.3 458.2 C1203.17 458.80 1205.03 459.10 1206.9 459.1 C1208.43 459.10 1209.97 452.71 1211.5 446.2 C1212.57 441.67 1213.63 421.20 1214.7 421.2 C1215.80 421.20 1216.90 456.40 1218.0 456.4 C1218.93 456.40 1219.87 447.66 1220.8 440.6 C1221.60 434.55 1222.40 413.80 1223.2 413.8 C1223.93 413.80 1224.67 419.78 1225.4 421.2 C1226.33 423.00 1227.27 424.90 1228.2 424.9 C1229.10 424.90 1230.00 409.55 1230.9 401.8 C1231.40 397.49 1231.90 388.80 1232.4 388.8 C1233.00 388.80 1233.60 409.50 1234.2 409.5 C1234.83 409.50 1235.47 331.10 1236.1 331.1 C1236.60 331.10 1237.10 417.70 1237.6 417.7 C1238.10 417.70 1238.60 388.80 1239.1 388.8 C1239.57 388.80 1240.03 402.10 1240.5 402.1 C1241.00 402.10 1241.50 225.50 1242.0 225.5 C1242.33 225.50 1242.67 408.80 1243.0 408.8 C1243.67 408.80 1244.33 405.61 1245.0 400.6 C1245.83 394.33 1246.67 215.50 1247.5 215.5 C1247.90 215.50 1248.30 256.60 1248.7 256.6 C1249.43 256.60 1250.17 232.90 1250.9 232.9 C1252.37 232.90 1253.83 238.89 1255.3 264.0 C1255.57 268.57 1255.83 387.30 1256.1 387.3 C1256.33 387.30 1256.57 333.30 1256.8 333.3 C1257.30 333.30 1257.80 366.60 1258.3 366.6 C1258.63 366.60 1258.97 249.20 1259.3 249.2 C1259.70 249.20 1260.10 380.70 1260.5 380.7 C1260.77 380.70 1261.03 250.70 1261.3 250.7 C1262.13 250.70 1262.97 384.40 1263.8 384.4 C1264.10 384.40 1264.40 196.70 1264.7 196.7 C1265.03 196.70 1265.37 358.50 1265.7 358.5 C1266.20 358.50 1266.70 219.60 1267.2 219.6 C1267.70 219.60 1268.20 395.50 1268.7 395.5 C1268.93 395.50 1269.17 270.00 1269.4 270.0 C1270.63 270.00 1271.87 304.00 1273.1 304.0 C1273.60 304.00 1274.10 256.07 1274.6 255.1 C1275.10 254.13 1275.60 253.60 1276.1 253.6 C1277.33 253.60 1278.57 357.00 1279.8 357.0 C1280.27 357.00 1280.73 321.23 1281.2 308.4 C1281.70 294.65 1282.20 274.40 1282.7 274.4 C1283.47 274.40 1284.23 281.80 1285.0 281.8 C1285.23 281.80 1285.47 257.60 1285.7 245.5" fill="none" stroke="#7eb26d" stroke-width="2.2" stroke-linejoin="round"/><path d="M857 346.80 L867.8 346.80 L869 340.55 L901.8 340.55 L903 334.30 L909.0 334.30 L910.2 328.05 L922.6 328.05 L923.8 321.80 L936.1 321.80 L937.3 315.55 L949.7 315.55 L950.9 309.30 L961.3 309.30 L962.5 303.05 L976.8 303.05 L978 296.80 L995.8 296.80 L997 290.55 L1026.1 290.55 L1027.3 296.80 L1212.5 296.80 L1213.7 290.55 L1243.8 290.55 L1245 284.30 L1252.0 284.30 L1253.2 278.05 L1264.2 278.05 L1265.4 271.80 L1278.4 271.80 L1279.6 265.55 L1285.5 265.55" fill="none" stroke="#1f78c1" stroke-width="2.2" stroke-linejoin="round"/></svg>
<div class="t" style="right:1321px;top:490.80px;font-size:12px;color:#c7c8d2;font-weight:400;transform:scaleX(1.04);transform-origin:right 0;">0 W</div>
<div class="t" style="right:1321px;top:416.16px;font-size:12px;color:#c7c8d2;font-weight:400;transform:scaleX(1.04);transform-origin:right 0;">500 W</div>
<div class="t" style="right:1321px;top:341.52px;font-size:12px;color:#c7c8d2;font-weight:400;transform:scaleX(1.04);transform-origin:right 0;">1 kW</div>
<div class="t" style="right:1321px;top:266.88px;font-size:12px;color:#c7c8d2;font-weight:400;transform:scaleX(1.04);transform-origin:right 0;">1.50 kW</div>
<div class="t" style="right:1321px;top:192.24px;font-size:12px;color:#c7c8d2;font-weight:400;transform:scaleX(1.04);transform-origin:right 0;">2 kW</div>
<div class="t" style="right:1321px;top:117.60px;font-size:12px;color:#c7c8d2;font-weight:400;transform:scaleX(1.04);transform-origin:right 0;">2.50 kW</div>
<div class="t" style="left:1847px;top:491.80px;font-size:12px;color:#c7c8d2;font-weight:400;transform:scaleX(1.04);transform-origin:left 0;">0 °C</div>
<div class="t" style="left:1847px;top:429.30px;font-size:12px;color:#c7c8d2;font-weight:400;transform:scaleX(1.04);transform-origin:left 0;">10 °C</div>
<div class="t" style="left:1847px;top:366.80px;font-size:12px;color:#c7c8d2;font-weight:400;transform:scaleX(1.04);transform-origin:left 0;">20 °C</div>
<div class="t" style="left:1847px;top:304.30px;font-size:12px;color:#c7c8d2;font-weight:400;transform:scaleX(1.04);transform-origin:left 0;">30 °C</div>
<div class="t" style="left:1847px;top:241.80px;font-size:12px;color:#c7c8d2;font-weight:400;transform:scaleX(1.04);transform-origin:left 0;">40 °C</div>
<div class="t" style="left:1847px;top:179.30px;font-size:12px;color:#c7c8d2;font-weight:400;transform:scaleX(1.04);transform-origin:left 0;">50 °C</div>
<div class="t" style="left:1847px;top:116.80px;font-size:12px;color:#c7c8d2;font-weight:400;transform:scaleX(1.04);transform-origin:left 0;">60 °C</div>
<div class="t" style="left:597.6px;top:506.70px;font-size:12px;color:#c7c8d2;font-weight:400;transform:translateX(-50%) scaleX(1.08);transform-origin:center 0;">04:00</div>
<div class="t" style="left:728.0px;top:506.70px;font-size:12px;color:#c7c8d2;font-weight:400;transform:translateX(-50%) scaleX(1.08);transform-origin:center 0;">06:00</div>
<div class="t" style="left:858.4000000000001px;top:506.70px;font-size:12px;color:#c7c8d2;font-weight:400;transform:translateX(-50%) scaleX(1.08);transform-origin:center 0;">08:00</div>
<div class="t" style="left:988.8000000000001px;top:506.70px;font-size:12px;color:#c7c8d2;font-weight:400;transform:translateX(-50%) scaleX(1.08);transform-origin:center 0;">10:00</div>
<div class="t" style="left:1119.2px;top:506.70px;font-size:12px;color:#c7c8d2;font-weight:400;transform:translateX(-50%) scaleX(1.08);transform-origin:center 0;">12:00</div>
<div class="t" style="left:1249.6px;top:506.70px;font-size:12px;color:#c7c8d2;font-weight:400;transform:translateX(-50%) scaleX(1.08);transform-origin:center 0;">14:00</div>
<div class="t" style="left:1380.0px;top:506.70px;font-size:12px;color:#c7c8d2;font-weight:400;transform:translateX(-50%) scaleX(1.08);transform-origin:center 0;">16:00</div>
<div class="t" style="left:1510.4px;top:506.70px;font-size:12px;color:#c7c8d2;font-weight:400;transform:translateX(-50%) scaleX(1.08);transform-origin:center 0;">18:00</div>
<div class="t" style="left:1640.8000000000002px;top:506.70px;font-size:12px;color:#c7c8d2;font-weight:400;transform:translateX(-50%) scaleX(1.08);transform-origin:center 0;">20:00</div>
<div class="t" style="left:1771.2000000000003px;top:506.70px;font-size:12px;color:#c7c8d2;font-weight:400;transform:translateX(-50%) scaleX(1.08);transform-origin:center 0;">22:00</div>
<div style="position:absolute;left:555px;top:537.5px;width:15px;height:4.5px;background:#7eb26d;border-radius:1px;"></div>
<div class="t" style="left:579px;top:532.20px;font-size:13.5px;color:#ccccdc;font-weight:400;">Leistung</div>
<div style="position:absolute;left:1787px;top:537px;width:16px;height:4.5px;background:#1f78c1;border-radius:1px;"></div>
<div class="t" style="left:1812px;top:531.90px;font-size:13.3px;color:#ccccdc;font-weight:400;">Temperatur</div>
<div class="t" style="left:530.05px;top:576.90px;font-size:15.2px;color:#ccccdc;font-weight:700;transform:translateX(-50%) scaleX(0.928);transform-origin:center 0;">Solarleistung</div>
<div style="position:absolute;left:81px;top:602.5px;width:899px;height:1px;background:#111217;"></div>
<div style="position:absolute;left:81px;top:603.5px;width:899px;height:36.5px;background:#22252b;"></div>
<div style="position:absolute;left:81px;top:640px;width:899px;height:6px;background:linear-gradient(#111217 0,#111217 1.5px,#181b1f 1.5px,#181b1f 4.8px,#0e1218 4.8px);"></div>
<div class="t" style="left:97.0px;top:612.60px;font-size:20px;color:#33a2e5;font-weight:400;transform:scaleX(0.9922212618841834);transform-origin:left 0;-webkit-text-stroke:0.6px #33a2e5;">Bezeichnung</div>
<div class="t" style="left:713.0px;top:612.60px;font-size:20px;color:#33a2e5;font-weight:400;transform:scaleX(0.9992743105950652);transform-origin:left 0;-webkit-text-stroke:0.6px #33a2e5;">Summe</div>
<div style="position:absolute;left:81px;top:646px;width:899px;height:47.2px;background:#c15c17;"></div>
<div class="t" style="left:96.6px;top:661.00px;font-size:19.5px;color:#ffffff;font-weight:400;-webkit-text-stroke:0.3px #ffffff;">Erzeugte Energie von Heute</div>
<div class="t" style="left:713.6px;top:661.00px;font-size:19.5px;color:#ffffff;font-weight:400;transform:scaleX(1.022);transform-origin:left 0;-webkit-text-stroke:0.3px #ffffff;">2.40 kWh</div>
<div style="position:absolute;left:81px;top:693.2px;width:899px;height:2.0px;background:#0b0c0e;"></div>
<div style="position:absolute;left:81px;top:695.2px;width:899px;height:47.5px;background:#c15c17;"></div>
<div class="t" style="left:96.6px;top:710.20px;font-size:19.5px;color:#ffffff;font-weight:400;transform:scaleX(1.014);transform-origin:left 0;-webkit-text-stroke:0.3px #ffffff;">Gesamte Energie diesen Monat</div>
<div class="t" style="left:713.6px;top:710.20px;font-size:19.5px;color:#ffffff;font-weight:400;transform:scaleX(1.022);transform-origin:left 0;-webkit-text-stroke:0.3px #ffffff;">124.00 kWh</div>
<div style="position:absolute;left:81px;top:742.7px;width:899px;height:2.2999999999999545px;background:#0b0c0e;"></div>
<div style="position:absolute;left:81px;top:745.0px;width:899px;height:47.8px;background:#c15c17;"></div>
<div class="t" style="left:96.6px;top:760.00px;font-size:19.5px;color:#ffffff;font-weight:400;transform:scaleX(1.032);transform-origin:left 0;-webkit-text-stroke:0.3px #ffffff;">Gesamtleistung dieses Jahr</div>
<div class="t" style="left:713.6px;top:760.00px;font-size:19.5px;color:#ffffff;font-weight:400;transform:scaleX(1.022);transform-origin:left 0;-webkit-text-stroke:0.3px #ffffff;">2.83 MWh</div>
<div style="position:absolute;left:690px;top:646px;width:2px;height:146.8px;background:#0b0c0e;"></div>
<div style="position:absolute;left:81px;top:792.8px;width:899px;height:1.2px;background:#0b0c0e;"></div>
<div class="t" style="left:1439.75px;top:576.90px;font-size:15.2px;color:#ccccdc;font-weight:700;transform:translateX(-50%) scaleX(0.942);transform-origin:center 0;">Tagesleistung</div>
<svg style="position:absolute;left:1785px;top:579px;" width="14" height="14" viewBox="0 0 14 14"><g fill="none" stroke="#33a2e5" stroke-width="1.4"><circle cx="6.5" cy="6.5" r="5.7"/><path d="M6.5 3.3 V7 H4.2" stroke-linecap="round"/></g></svg>
<div class="t" style="left:1803.2px;top:579.00px;font-size:12.5px;color:#33a2e5;font-weight:400;transform:scaleX(1.0506849315068494);transform-origin:left 0;-webkit-text-stroke:0.5px #33a2e5;">Last 4 weeks</div>
<svg style="position:absolute;left:989px;top:566px" width="900" height="240" viewBox="989 566 900 240"><path d="M1082 621.50 H1863" stroke="#3b3c41" stroke-width="1"/><path d="M1082 669.50 H1863" stroke="#3b3c41" stroke-width="1"/><path d="M1082 717.50 H1863" stroke="#3b3c41" stroke-width="1"/><path d="M1149.20 621 V765" stroke="#3b3c41" stroke-width="1"/><path d="M1232.86 621 V765" stroke="#3b3c41" stroke-width="1"/><path d="M1316.52 621 V765" stroke="#3b3c41" stroke-width="1"/><path d="M1400.18 621 V765" stroke="#3b3c41" stroke-width="1"/><path d="M1483.84 621 V765" stroke="#3b3c41" stroke-width="1"/><path d="M1567.50 621 V765" stroke="#3b3c41" stroke-width="1"/><path d="M1651.16 621 V765" stroke="#3b3c41" stroke-width="1"/><path d="M1734.82 621 V765" stroke="#3b3c41" stroke-width="1"/><path d="M1818.48 621 V765" stroke="#3b3c41" stroke-width="1"/><rect x="1082.00" y="631.2" width="4.20" height="133.8" fill="#eab839"/><rect x="1095.10" y="670.8" width="18.60" height="94.2" fill="#eab839"/><rect x="1122.97" y="654.4" width="18.60" height="110.6" fill="#eab839"/><rect x="1150.84" y="732.0" width="18.60" height="33.0" fill="#eab839"/><rect x="1178.71" y="729.2" width="18.60" height="35.8" fill="#eab839"/><rect x="1206.58" y="689.0" width="18.60" height="76.0" fill="#eab839"/><rect x="1234.45" y="720.9" width="18.60" height="44.1" fill="#eab839"/><rect x="1262.32" y="701.4" width="18.60" height="63.6" fill="#eab839"/><rect x="1290.19" y="722.4" width="18.60" height="42.6" fill="#eab839"/><rect x="1318.06" y="673.6" width="18.60" height="91.4" fill="#eab839"/><rect x="1345.93" y="749.4" width="18.60" height="15.6" fill="#eab839"/><rect x="1373.80" y="754.3" width="18.60" height="10.7" fill="#eab839"/><rect x="1401.67" y="691.8" width="18.60" height="73.2" fill="#eab839"/><rect x="1429.54" y="662.7" width="18.60" height="102.3" fill="#eab839"/><rect x="1457.41" y="642.0" width="18.60" height="123.0" fill="#eab839"/><rect x="1485.28" y="707.0" width="18.60" height="58.0" fill="#eab839"/><rect x="1513.15" y="674.5" width="18.60" height="90.5" fill="#eab839"/><rect x="1541.02" y="658.1" width="18.60" height="106.9" fill="#eab839"/><rect x="1568.89" y="634.3" width="18.60" height="130.7" fill="#eab839"/><rect x="1596.76" y="691.9" width="18.60" height="73.1" fill="#eab839"/><rect x="1624.63" y="745.7" width="18.60" height="19.3" fill="#eab839"/><rect x="1652.50" y="717.0" width="18.60" height="48.0" fill="#eab839"/><rect x="1680.37" y="726.2" width="18.60" height="38.8" fill="#eab839"/><rect x="1708.24" y="743.9" width="18.60" height="21.1" fill="#eab839"/><rect x="1736.11" y="738.0" width="18.60" height="27.0" fill="#eab839"/><rect x="1763.98" y="710.1" width="18.60" height="54.9" fill="#eab839"/><rect x="1791.85" y="658.1" width="18.60" height="106.9" fill="#eab839"/><rect x="1819.72" y="694.7" width="18.60" height="70.3" fill="#eab839"/><rect x="1847.59" y="742.6" width="15.01" height="22.4" fill="#eab839"/><path d="M1082 765.5 H1863" stroke="#3b3c41" stroke-width="1"/></svg>
<div class="t" style="right:837px;top:759.60px;font-size:12px;color:#c7c8d2;font-weight:400;transform:scaleX(1.04);transform-origin:right 0;">0.0 Wh</div>
<div class="t" style="right:837px;top:711.60px;font-size:12px;color:#c7c8d2;font-weight:400;transform:scaleX(1.04);transform-origin:right 0;">5.0 kWh</div>
<div class="t" style="right:837px;top:663.60px;font-size:12px;color:#c7c8d2;font-weight:400;transform:scaleX(1.04);transform-origin:right 0;">10.0 kWh</div>
<div class="t" style="right:837px;top:615.60px;font-size:12px;color:#c7c8d2;font-weight:400;transform:scaleX(1.04);transform-origin:right 0;">15.0 kWh</div>
<div class="t" style="left:1149.2px;top:775.00px;font-size:12px;color:#c7c8d2;font-weight:400;transform:translateX(-50%) scaleX(1.08);transform-origin:center 0;">09/24</div>
<div class="t" style="left:1232.8600000000001px;top:775.00px;font-size:12px;color:#c7c8d2;font-weight:400;transform:translateX(-50%) scaleX(1.08);transform-origin:center 0;">09/27</div>
<div class="t" style="left:1316.52px;top:775.00px;font-size:12px;color:#c7c8d2;font-weight:400;transform:translateX(-50%) scaleX(1.08);transform-origin:center 0;">09/30</div>
<div class="t" style="left:1400.18px;top:775.00px;font-size:12px;color:#c7c8d2;font-weight:400;transform:translateX(-50%) scaleX(1.08);transform-origin:center 0;">10/03</div>
<div class="t" style="left:1483.8400000000001px;top:775.00px;font-size:12px;color:#c7c8d2;font-weight:400;transform:translateX(-50%) scaleX(1.08);transform-origin:center 0;">10/06</div>
<div class="t" style="left:1567.5px;top:775.00px;font-size:12px;color:#c7c8d2;font-weight:400;transform:translateX(-50%) scaleX(1.08);transform-origin:center 0;">10/09</div>
<div class="t" style="left:1651.16px;top:775.00px;font-size:12px;color:#c7c8d2;font-weight:400;transform:translateX(-50%) scaleX(1.08);transform-origin:center 0;">10/12</div>
<div class="t" style="left:1734.8200000000002px;top:775.00px;font-size:12px;color:#c7c8d2;font-weight:400;transform:translateX(-50%) scaleX(1.08);transform-origin:center 0;">10/15</div>
<div class="t" style="left:1818.48px;top:775.00px;font-size:12px;color:#c7c8d2;font-weight:400;transform:translateX(-50%) scaleX(1.08);transform-origin:center 0;">10/18</div>
<div class="t" style="left:1009px;top:699.5px;font-size:12px;color:#c7c8d2;transform:translate(-50%,-50%) rotate(-90deg) scaleX(1.1);transform-origin:center;line-height:12px">pro Tag</div>
</body></html>
